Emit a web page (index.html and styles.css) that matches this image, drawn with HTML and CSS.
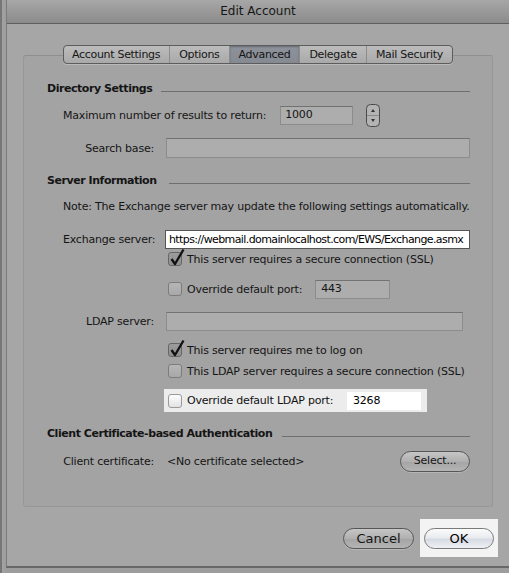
FILE: index.html
```html
<!DOCTYPE html>
<html>
<head>
<meta charset="utf-8">
<title>Edit Account</title>
<link rel="stylesheet" href="styles.css">
</head>
<body>
<div class="frame">
  <div class="window">
    <div class="titlebar">Edit Account</div>
    <div class="tabs">
      <span class="tab">Account Settings</span>
      <span class="tab">Options</span>
      <span class="tab sel">Advanced</span>
      <span class="tab">Delegate</span>
      <span class="tab">Mail Security</span>
    </div>
    <div class="group">
      <div class="hdr r-dir"><span>Directory Settings</span></div>
      <div class="row r-max">
        <span class="lbl-free">Maximum number of results to return:</span>
        <div class="field f-num">1000</div>
        <svg class="stepper" width="14" height="23" viewBox="0 0 14 23">
          <rect x="0.5" y="0.5" width="13" height="22" rx="4" ry="4" fill="#b3b3b3" stroke="#4a4a4a"/>
          <line x1="1" y1="11.5" x2="13" y2="11.5" stroke="#8a8a8a"/>
          <path d="M5 8 L7 5 L9 8 Z" fill="#333"/>
          <path d="M5 15 L7 18 L9 15 Z" fill="#333"/>
        </svg>
      </div>
      <div class="row r-search">
        <span class="lbl">Search base:</span>
        <div class="field grow"></div>
      </div>

      <div class="hdr r-srv"><span>Server Information</span></div>
      <div class="row r-note">
        <span class="lbl-free">Note: The Exchange server may update the following settings automatically.</span>
      </div>
      <div class="row r-exch">
        <span class="lbl">Exchange server:</span>
        <div class="field white grow exch">https://webmail.domainlocalhost.com/EWS/Exchange.asmx</div>
      </div>
      <div class="row indent r-ssl">
        <span class="cb checked"><svg class="tick" width="16" height="19" viewBox="0 0 16 19"><path d="M2.5 11 L6 16 L14.5 1.5" fill="none" stroke="#111" stroke-width="2.3" stroke-linejoin="round"/></svg></span>
        <span class="cbl">This server requires a secure connection (SSL)</span>
      </div>
      <div class="row indent r-port">
        <span class="cb"></span>
        <span class="cbl">Override default port:</span>
        <div class="field f-port">443</div>
      </div>
      <div class="row r-ldap">
        <span class="lbl">LDAP server:</span>
        <div class="field grow ldap"></div>
      </div>
      <div class="row indent r-logon">
        <span class="cb checked"><svg class="tick" width="16" height="19" viewBox="0 0 16 19"><path d="M2.5 11 L6 16 L14.5 1.5" fill="none" stroke="#111" stroke-width="2.3" stroke-linejoin="round"/></svg></span>
        <span class="cbl">This server requires me to log on</span>
      </div>
      <div class="row indent r-lssl">
        <span class="cb"></span>
        <span class="cbl">This LDAP server requires a secure connection (SSL)</span>
      </div>
      <div class="r-spot">
        <div class="spot ldap-spot">
          <span class="cb bright"></span>
          <span class="cbl">Override default LDAP port:</span>
          <div class="field white f-lport">3268</div>
        </div>
      </div>

      <div class="hdr r-cli"><span>Client Certificate-based Authentication</span></div>
      <div class="row r-cert">
        <span class="lbl">Client certificate:</span>
        <span class="val">&lt;No certificate selected&gt;</span>
        <span class="btn select">Select...</span>
      </div>
    </div>
    <div class="buttons">
      <span class="btn cancel">Cancel</span>
      <div class="spot ok-spot"><span class="btn ok">OK</span></div>
    </div>
  </div>
</div>
</body>
</html>
```

FILE: styles.css
```css
* { box-sizing: border-box; }
html, body { margin: 0; padding: 0; }
body {
  width: 509px;
  height: 573px;
  overflow: hidden;
  background: #8e8e8e;
  font-family: "DejaVu Sans", Verdana, sans-serif;
  font-size: 11px;
  letter-spacing: -0.2px;
  color: #151515;
}
.frame {
  height: 573px;
  padding-left: 6px;
  background: linear-gradient(to right, #767676 0, #767676 2px, #a2a2a2 2px, #9d9d9d 6px);
}
.window {
  height: 568px;
  background: #a6a6a6;
  border-left: 1px solid #7b7b7b;
  border-bottom: 2px solid #686868;
  display: flex;
  flex-direction: column;
}
.titlebar {
  height: 24px;
  flex: none;
  background: linear-gradient(#a7a7a7, #8b8b8b);
  border-bottom: 1px solid #5e5e5e;
  text-align: center;
  font-size: 12px;
  letter-spacing: 0;
  line-height: 23px;
  color: #161616;
}
.tabs {
  align-self: center;
  margin-top: 21px;
  height: 19px;
  display: flex;
  position: relative;
  z-index: 2;
  border: 1px solid #5c5c5c;
  border-radius: 4px;
  background: linear-gradient(#bcbcbc, #a9a9a9);
  box-shadow: 0 1px 0 rgba(255,255,255,0.25);
  overflow: hidden;
  letter-spacing: -0.3px;
}
.tab {
  padding: 0 9px;
  line-height: 17px;
  border-left: 1px solid #8c8c8c;
}
.tab:first-child { border-left: 0; padding-left: 8px; }
.tab.sel {
  background: linear-gradient(#8d929b, #868a93);
  box-shadow: inset 0 1px 2px rgba(0,0,0,0.25);
}
.group {
  margin: -9px 16px 0 16px;
  height: 452px;
  flex: none;
  border: 1px solid #979797;
  border-top-color: #8f8f8f;
  border-radius: 3px;
  background: #a3a3a3;
  padding: 25px 22px 0 23px;
  display: flex;
  flex-direction: column;
}
.hdr {
  height: 14px;
  display: flex;
  align-items: center;
  font-weight: bold;
  letter-spacing: -0.45px;
}
.hdr::after {
  content: "";
  flex: 1;
  height: 1px;
  background: #6f6f6f;
  margin-left: 9px;
  margin-top: 7px;
}
.row {
  display: flex;
  align-items: center;
}
.lbl {
  width: 91px;
  margin-left: 16px;
  margin-right: 12px;
  text-align: right;
  white-space: nowrap;
  flex: none;
}
.lbl-free { margin-left: 16px; white-space: nowrap; }
.indent { padding-left: 121px; }
.field {
  height: 19px;
  background: #adadad;
  border: 1px solid #8c8c8c;
  border-top-color: #727272;
  padding: 0 4px;
  line-height: 16px;
  white-space: nowrap;
  overflow: hidden;
}
.grow { flex: 1; }
.white { background: #fff; color: #000; }

.r-dir { margin-top: 0; }
.r-max { margin-top: 8px; height: 24px; }
.f-num { width: 73px; height: 19px; margin-left: 14px; }
.stepper { margin-left: 13px; display: block; }
.r-search { margin-top: 11px; height: 20px; }
.r-search .field { height: 20px; }
.r-srv { margin-top: 15px; }
.r-srv::after { margin-left: 12px; }
.r-note { margin-top: 12px; height: 14px; }
.r-exch { margin-top: 16px; height: 20px; }
.exch {
  height: 19px;
  margin-left: -1px;
  border: 1px solid #555;
  line-height: 17px;
  letter-spacing: -0.6px;
  padding-left: 3px;
}
.r-ssl { margin-top: 2px; height: 16px; }
.r-port { margin-top: 12px; height: 20px; }
.f-port { width: 75px; height: 19px; margin-left: 13px; padding-left: 5px; }
.r-ldap { margin-top: 12px; height: 20px; }
.ldap { height: 19px; margin-right: 7px; }
.r-logon { margin-top: 11px; height: 16px; }
.r-lssl { margin-top: 5px; height: 16px; }
.r-spot { margin-top: 10px; height: 23px; padding-left: 117px; display: flex; }
.r-cli { margin-top: 14px; }
.r-cli::after { margin-left: 10px; }
.r-cert { margin-top: 10px; height: 22px; }
.val { white-space: nowrap; margin-left: 1px; }

.cb {
  width: 14px;
  height: 14px;
  flex: none;
  border: 1px solid #7c7c7c;
  border-radius: 3px;
  background: linear-gradient(#b6b6b6, #a8a8a8);
  position: relative;
}
.cb.checked { background: linear-gradient(#9c9c9c, #8f8f8f); border-color: #666; }
.cb.bright { background: linear-gradient(#fdfdfd, #e2e2e2); border-color: #9a9a9a; }
.tick { position: absolute; left: 0; top: -5px; }
.cbl { margin-left: 5px; white-space: nowrap; }

.spot {
  display: flex;
  align-items: center;
}
.ldap-spot {
  width: 263px;
  height: 23px;
  background: #ececec;
  padding-left: 4px;
  color: #111;
}
.f-lport {
  width: 74px;
  height: 18px;
  margin-left: auto;
  margin-right: 6px;
  border: 0;
  padding-left: 6px;
  line-height: 18px;
}

.btn {
  display: flex;
  align-items: center;
  justify-content: center;
  border: 1px solid #565656;
  border-radius: 11px;
  background: linear-gradient(#c6c6c6, #b0b0b0 50%, #a6a6a6 55%, #b4b4b4);
  box-shadow: 0 1px 0 rgba(255,255,255,0.2);
  white-space: nowrap;
  flex: none;
}
.select { width: 70px; height: 21px; margin-left: auto; padding-bottom: 2px; }
.buttons {
  margin-top: 12px;
  display: flex;
  align-items: center;
  justify-content: flex-end;
  padding-right: 11px;
}
.cancel { width: 71px; height: 21px; font-size: 13px; letter-spacing: 0; margin-right: 6px; }
.ok-spot {
  width: 78px;
  height: 38px;
  background: #f3f3f3;
  justify-content: center;
}
.ok {
  width: 70px;
  height: 21px;
  font-size: 13px;
  letter-spacing: 0;
  color: #000;
  border-color: #7a7a7a;
  background: linear-gradient(#fbfbfb, #e9ebef 45%, #d7dbe3 55%, #eef0f4);
}
```
